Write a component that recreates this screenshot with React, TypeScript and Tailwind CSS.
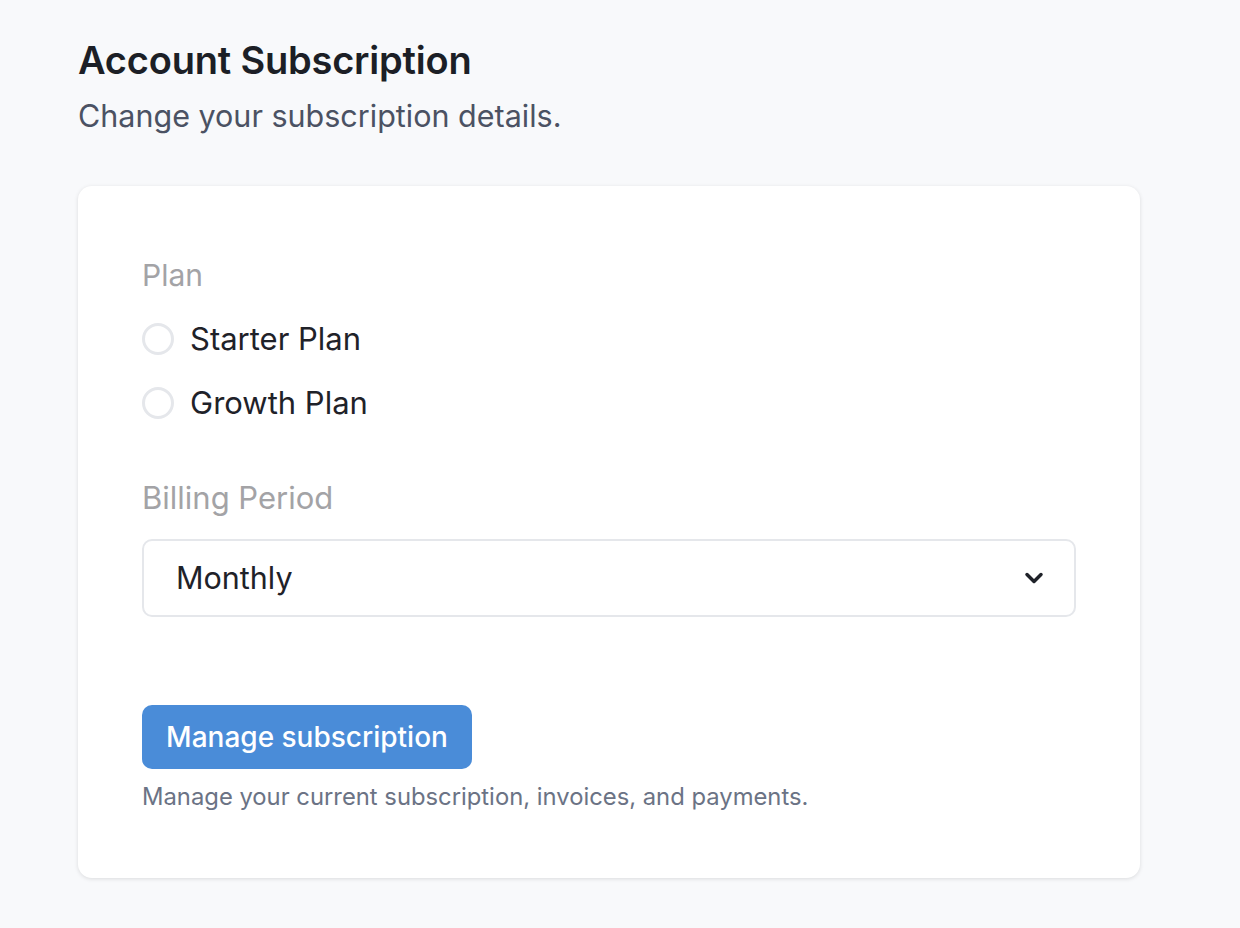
import { ChevronDown } from "lucide-react";

const font = { fontFamily: "Inter, 'Noto Sans', sans-serif" };

function Radio({ label }: { label: string }) {
  return (
    <label className="flex items-center gap-[16px] h-[64px]">
      <span className="w-[32px] h-[32px] rounded-full border-[3px] border-[#e5e7eb] bg-white shrink-0" />
      <span className="text-[31px] text-[#1f2229]">{label}</span>
    </label>
  );
}

export default function App() {
  return (
    <div className="min-h-[928px] bg-[#f8f9fb] px-[78px] pt-[38px]" style={font}>
      <h1 className="text-[38px] font-semibold text-[#1c1f26] leading-[44px] tracking-[-0.2px]">
        Account Subscription
      </h1>
      <p className="mt-[16px] text-[30.5px] text-[#4b5263] leading-[36px]">
        Change your subscription details.
      </p>

      {/* Card */}
      <div className="mt-[52px] w-[1062px] bg-white rounded-[14px] shadow-[0_1px_4px_rgba(0,0,0,0.12)] px-[64px] pt-[70px] pb-[67px]">
        <div className="text-[30px] text-[#a3a3a6] leading-[38px]">Plan</div>
        <div className="mt-[13px] flex flex-col">
          <Radio label="Starter Plan" />
          <Radio label="Growth Plan" />
        </div>

        <div className="mt-[44px] text-[31px] text-[#a3a3a6] leading-[38px]">Billing Period</div>
        <div className="mt-[22px] h-[78px] border-2 border-[#e5e7eb] rounded-[10px] flex items-center justify-between pl-[32px] pr-[26px]">
          <span className="text-[30.5px] text-[#1f2229]">Monthly</span>
          <ChevronDown className="w-[28px] h-[28px] text-[#1f2229]" strokeWidth={3} />
        </div>

        <button className="mt-[88px] h-[64px] w-[330px] bg-[#4a8cd8] rounded-[10px] text-white text-[28px] font-medium">
          Manage subscription
        </button>
        <p className="mt-[14px] text-[23.8px] text-[#6b7385] leading-[28px]">
          Manage your current subscription, invoices, and payments.
        </p>
      </div>
    </div>
  );
}
